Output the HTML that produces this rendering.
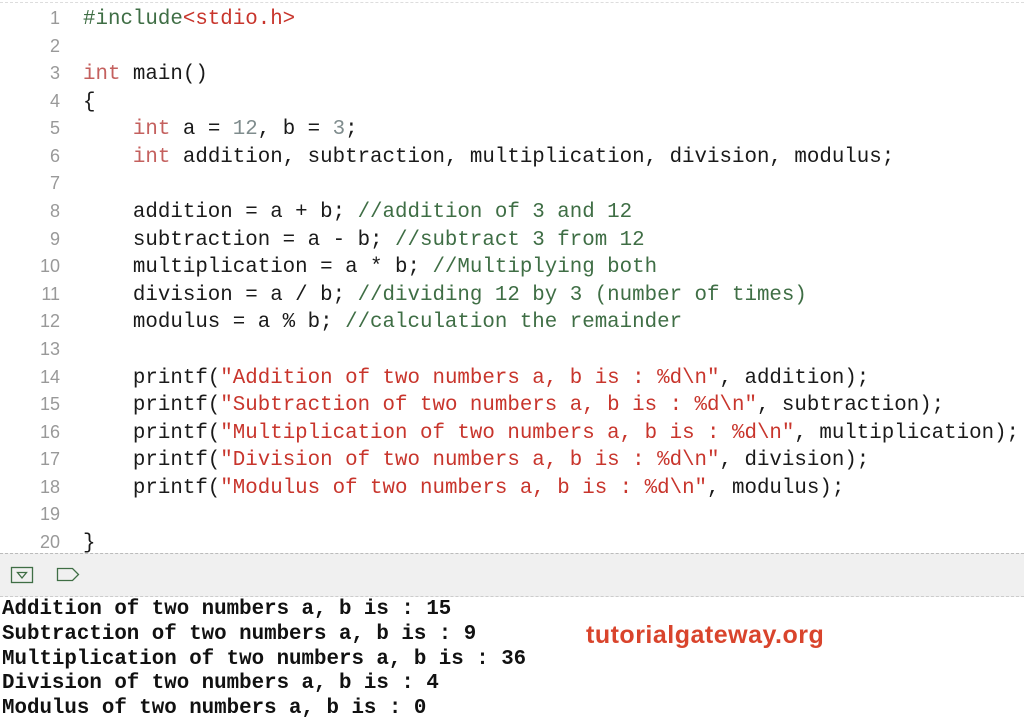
<!DOCTYPE html>
<html><head><meta charset="utf-8"><style>
body{margin:0;width:1024px;height:720px;background:#fff;overflow:hidden;position:relative;font-family:"Liberation Mono",monospace}
.top{position:absolute;left:0;right:0;top:2px;border-top:1px dashed #ddd}
.code{position:absolute;top:6px;left:0;font-size:20.8px;color:#1a1a1a}
.code div{height:27.58px;line-height:27.58px;white-space:pre;overflow:hidden}
.ln{display:inline-block;width:60px;text-align:right;color:#999;margin-right:23px;font-family:"Liberation Sans",sans-serif;font-size:18px;line-height:20px}
.k{color:#c4605e}.s{color:#c8352c}.c{color:#3f6e45}.n{color:#7f8c8d}.p{color:#3f6e45}
.bar{position:absolute;top:553px;left:0;right:0;height:42px;background:#f0f0f0;border-top:1px dashed #bbb;border-bottom:1px dashed #ccc}
.out{position:absolute;top:598px;left:2px;font-size:20.8px;line-height:24.75px;font-weight:bold;color:#111;white-space:pre}
.logo{position:absolute;left:586px;top:621px;font-family:"Liberation Sans",sans-serif;font-weight:bold;font-size:25px;color:#d9442c;letter-spacing:0.5px}
</style></head><body>
<div class="top"></div>
<div class="code"><div><span class="ln">1</span><span class="p">#include</span><span class="s">&lt;stdio.h&gt;</span></div><div><span class="ln">2</span></div><div><span class="ln">3</span><span class="k">int</span> main()</div><div><span class="ln">4</span>{</div><div><span class="ln">5</span>    <span class="k">int</span> a = <span class="n">12</span>, b = <span class="n">3</span>;</div><div><span class="ln">6</span>    <span class="k">int</span> addition, subtraction, multiplication, division, modulus;</div><div><span class="ln">7</span></div><div><span class="ln">8</span>    addition = a + b; <span class="c">//addition of 3 and 12</span></div><div><span class="ln">9</span>    subtraction = a - b; <span class="c">//subtract 3 from 12</span></div><div><span class="ln">10</span>    multiplication = a * b; <span class="c">//Multiplying both</span></div><div><span class="ln">11</span>    division = a / b; <span class="c">//dividing 12 by 3 (number of times)</span></div><div><span class="ln">12</span>    modulus = a % b; <span class="c">//calculation the remainder</span></div><div><span class="ln">13</span></div><div><span class="ln">14</span>    printf(<span class="s">"Addition of two numbers a, b is : %d\n"</span>, addition);</div><div><span class="ln">15</span>    printf(<span class="s">"Subtraction of two numbers a, b is : %d\n"</span>, subtraction);</div><div><span class="ln">16</span>    printf(<span class="s">"Multiplication of two numbers a, b is : %d\n"</span>, multiplication);</div><div><span class="ln">17</span>    printf(<span class="s">"Division of two numbers a, b is : %d\n"</span>, division);</div><div><span class="ln">18</span>    printf(<span class="s">"Modulus of two numbers a, b is : %d\n"</span>, modulus);</div><div><span class="ln">19</span></div><div><span class="ln">20</span>}</div></div>
<div class="bar">
<svg width="100" height="42" style="position:absolute;left:0;top:0">
<rect x="11.5" y="13.5" width="21" height="15" fill="none" stroke="#3f6e45" stroke-width="1.3"/>
<path d="M17.5 18.5 L26.5 18.5 L22 24 Z" fill="none" stroke="#3f6e45" stroke-width="1.3"/>
<path d="M57.5 14.5 L72.5 14.5 L78.5 20.5 L72.5 26.5 L57.5 26.5 Z" fill="none" stroke="#3f6e45" stroke-width="1.3"/>
</svg></div>
<div class="out">Addition of two numbers a, b is : 15
Subtraction of two numbers a, b is : 9
Multiplication of two numbers a, b is : 36
Division of two numbers a, b is : 4
Modulus of two numbers a, b is : 0</div>
<div class="logo">tutorialgateway.org</div>
</body></html>
